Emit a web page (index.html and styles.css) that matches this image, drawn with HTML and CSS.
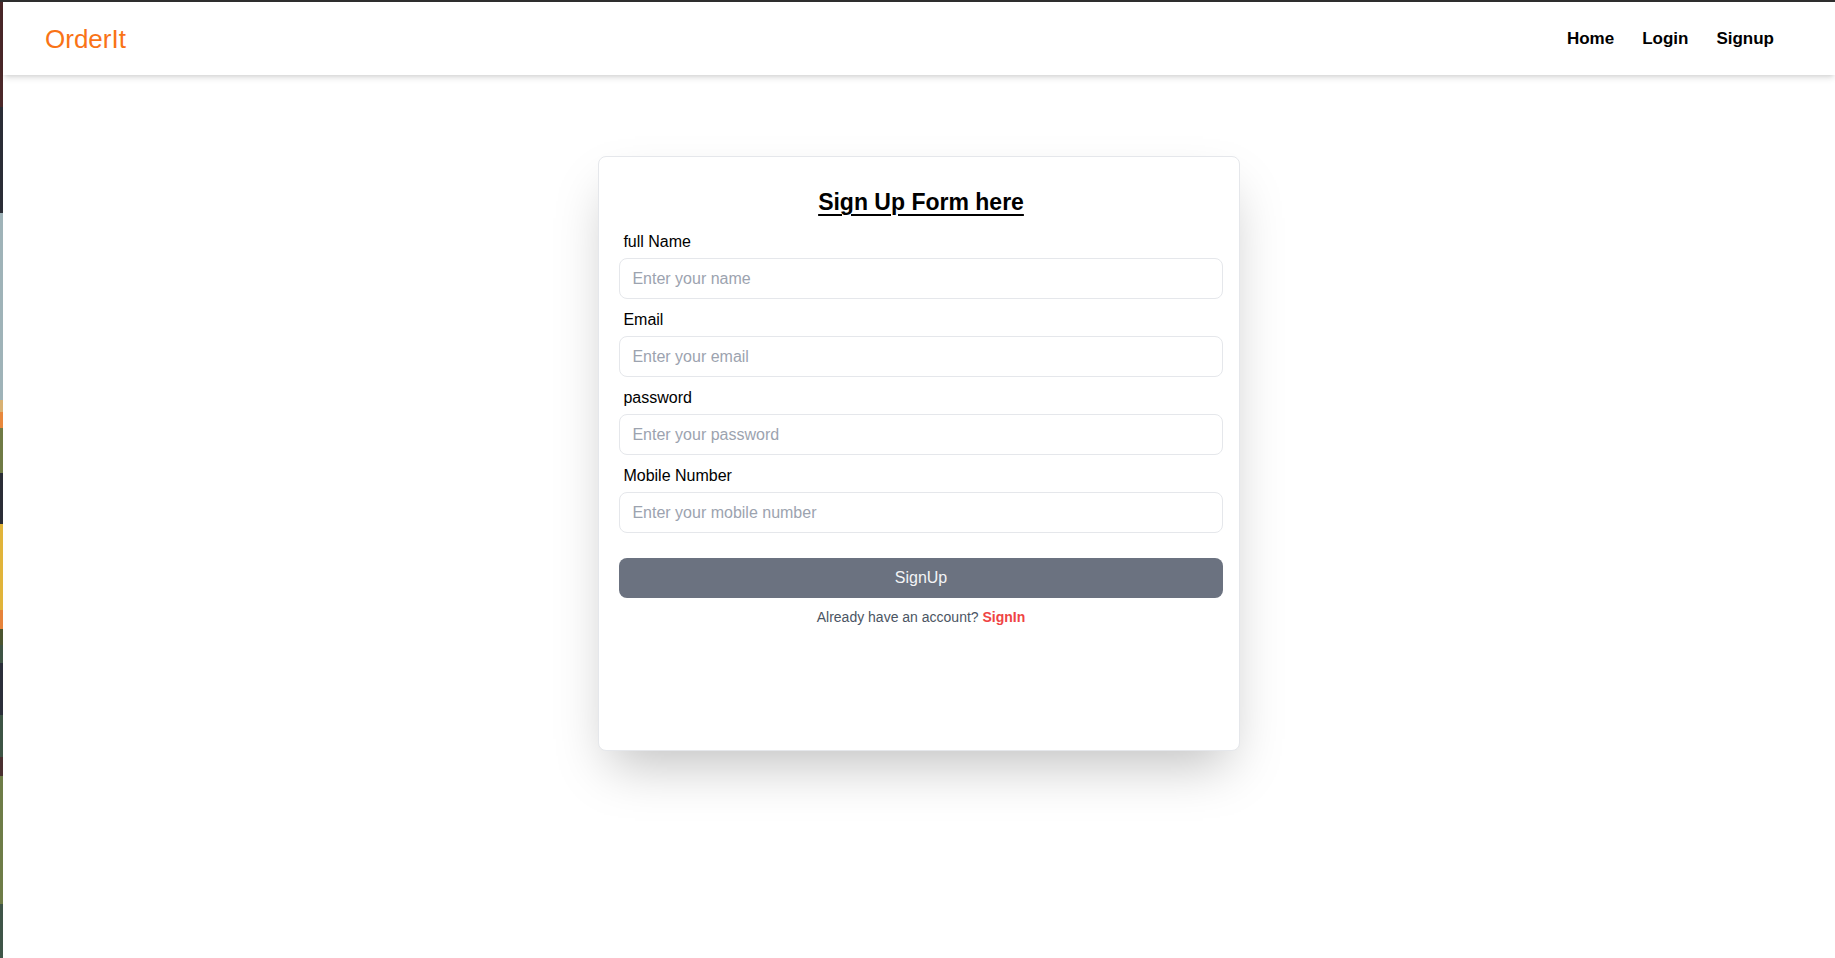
FILE: index.html
```html
<!DOCTYPE html>
<html lang="en">
<head>
<meta charset="utf-8">
<title>OrderIt - Sign Up</title>
<link rel="stylesheet" href="styles.css">
</head>
<body>
<div class="frame">
  <div class="strip"></div>
  <div class="app">
    <header class="navbar">
      <a class="logo" href="#">OrderIt</a>
      <nav class="nav">
        <a href="#">Home</a>
        <a href="#">Login</a>
        <a href="#">Signup</a>
      </nav>
    </header>
    <main class="main">
      <section class="card">
        <h1 class="title">Sign Up Form here</h1>
        <form class="form">
          <div class="field">
            <label class="label" for="name">full Name</label>
            <input class="input" id="name" type="text" placeholder="Enter your name">
          </div>
          <div class="field">
            <label class="label" for="email">Email</label>
            <input class="input" id="email" type="email" placeholder="Enter your email">
          </div>
          <div class="field">
            <label class="label" for="password">password</label>
            <input class="input" id="password" type="password" placeholder="Enter your password">
          </div>
          <div class="field">
            <label class="label" for="mobile">Mobile Number</label>
            <input class="input" id="mobile" type="text" placeholder="Enter your mobile number">
          </div>
          <button class="btn" type="button">SignUp</button>
          <p class="switch">Already have an account? <a href="#">SignIn</a></p>
        </form>
      </section>
    </main>
  </div>
</div>
</body>
</html>
```

FILE: styles.css
```css
* {
  box-sizing: border-box;
}

html, body {
  margin: 0;
  padding: 0;
  height: 100%;
  background: #ffffff;
}

body {
  font-family: "Liberation Sans", Arial, sans-serif;
  color: #000;
}

.frame {
  display: grid;
  grid-template-columns: 3px 1fr;
  height: 958px;
  border-top: 2px solid #2e2e2e;
  overflow: hidden;
}

.strip {
  background: linear-gradient(to bottom,
    #4b2829 0px, #4b2829 105px,
    #2a2d36 105px, #2a2d36 211px,
    #9fb3b8 211px, #9fb3b8 398px,
    #d8b173 398px, #d8b173 410px,
    #e8883c 410px, #e8883c 426px,
    #6f7a45 426px, #6f7a45 471px,
    #2a2d36 471px, #2a2d36 522px,
    #e1b43a 522px, #e1b43a 608px,
    #e6833b 608px, #e6833b 627px,
    #4b5530 627px, #4b5530 643px,
    #3e5445 643px, #3e5445 661px,
    #2b2f3a 661px, #2b2f3a 713px,
    #3d5445 713px, #3d5445 755px,
    #4a3030 755px, #4a3030 774px,
    #6e7c47 774px, #6e7c47 902px,
    #3f5548 902px, #3f5548 956px);
}

.app {
  display: flex;
  flex-direction: column;
  min-width: 0;
}

.navbar {
  height: 73px;
  flex: none;
  display: flex;
  align-items: center;
  justify-content: space-between;
  padding: 0 61px 0 42px;
  background: #fff;
  box-shadow: 0 4px 6px -1px rgba(0, 0, 0, 0.12), 0 2px 4px -2px rgba(0, 0, 0, 0.1);
  position: relative;
  z-index: 1;
}

.logo {
  font-size: 26px;
  color: #f97316;
  text-decoration: none;
  line-height: 1;
}

.nav {
  display: flex;
  gap: 28px;
}

.nav a {
  font-size: 17px;
  font-weight: 700;
  color: #000;
  text-decoration: none;
}

.main {
  display: flex;
  justify-content: center;
  padding-top: 81px;
}

.card {
  width: 35%;
  height: 595px;
  background: #fff;
  border: 1px solid #e5e7eb;
  border-radius: 8px;
  box-shadow: 0 25px 50px -12px rgba(0, 0, 0, 0.25);
  padding: 29px 16px 0 20px;
}

.title {
  margin: 0 0 12px;
  text-align: center;
  font-size: 23px;
  line-height: 32px;
  font-weight: 700;
  text-decoration: underline;
  text-decoration-thickness: 2px;
  text-underline-offset: 4px;
}

.form {
  display: flex;
  flex-direction: column;
}

.field {
  display: flex;
  flex-direction: column;
  margin-bottom: 9px;
}

.label {
  font-size: 16px;
  line-height: 24px;
  padding-left: 4px;
  margin-bottom: 4px;
  color: #000;
}

.input {
  height: 41px;
  width: 100%;
  border: 1px solid #e5e7eb;
  border-radius: 8px;
  padding: 0 12px;
  font-family: inherit;
  font-size: 16px;
  color: #111827;
  background: #fff;
  outline: none;
}

.input::placeholder {
  color: #9ca3af;
}

.btn {
  margin-top: 16px;
  height: 40px;
  width: 100%;
  border: none;
  border-radius: 8px;
  background: #6b7280;
  color: #f3f4f6;
  font-family: inherit;
  font-size: 16px;
  cursor: pointer;
}

.switch {
  margin: 9px 0 0;
  text-align: center;
  font-size: 14px;
  line-height: 20px;
  color: #4b5563;
}

.switch a {
  color: #ef4444;
  font-weight: 700;
  text-decoration: none;
}
```
